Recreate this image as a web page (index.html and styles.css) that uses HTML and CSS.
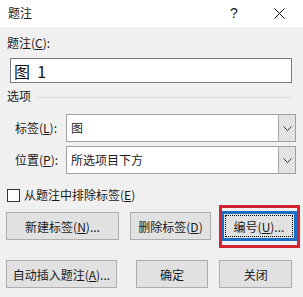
FILE: index.html
```html
<!DOCTYPE html>
<html lang="zh-CN">
<head>
  <meta charset="UTF-8">
  <title>题注</title>
  <link rel="stylesheet" href="styles.css">
</head>
<body>

  <!-- Caption dialog -->
  <div class="dialog">
    <div class="titlebar">
      <span class="title">题注</span>
      <span class="help">?</span>
      <span class="close">
        <svg width="11" height="11" viewBox="0 0 11 11"><path d="M0.5 0.5 L10.5 10.5 M10.5 0.5 L0.5 10.5" stroke="#111" stroke-width="1" fill="none"/></svg>
      </span>
    </div>

    <div class="content">
      <div class="field-label">题注(<u>C</u>):</div>
      <div class="caption-box"><span class="caption-text">图&nbsp;&nbsp;1</span></div>

      <div class="group-label">
        <span>选项</span>
        <span class="rule"></span>
      </div>

      <div class="option-row">
        <label class="option-label">标签(<u>L</u>):</label>
        <div class="combo">
          <span class="combo-text">图</span>
          <span class="combo-btn">
            <svg width="9" height="5" viewBox="0 0 9 5"><polyline points="0.5,0.5 4.5,4.5 8.5,0.5" stroke="#333" stroke-width="1" fill="none"/></svg>
          </span>
        </div>
      </div>

      <div class="option-row second">
        <label class="option-label">位置(<u>P</u>):</label>
        <div class="combo">
          <span class="combo-text">所选项目下方</span>
          <span class="combo-btn">
            <svg width="9" height="5" viewBox="0 0 9 5"><polyline points="0.5,0.5 4.5,4.5 8.5,0.5" stroke="#333" stroke-width="1" fill="none"/></svg>
          </span>
        </div>
      </div>

      <div class="check-row">
        <span class="checkbox"></span>
        <span>从题注中排除标签(<u>E</u>)</span>
      </div>

      <div class="btn-row">
        <button class="btn btn-wide">新建标签(<u>N</u>)...</button>
        <button class="btn btn-mid">删除标签(<u>D</u>)</button>
        <div class="highlight">
          <button class="btn btn-small btn-focus"><span class="focus-rect">编号(<u>U</u>)...</span></button>
        </div>
      </div>

      <div class="btn-row last">
        <button class="btn btn-wide">自动插入题注(<u>A</u>)...</button>
        <button class="btn btn-small btn-ok">确定</button>
        <button class="btn btn-small">关闭</button>
      </div>
    </div>

    <div class="bottom-edge"></div>
  </div>

</body>
</html>
```

FILE: styles.css
```css
/* Page */
body {
  margin: 0;
  background-color: #f0f0f0;
  font-family: "Noto Sans CJK SC", "Microsoft YaHei", sans-serif;
  font-size: 12px;
  color: #1a1a1a;
}

.dialog {
  width: 303px;
  height: 297px;
  background-color: #f0f0f0;
  overflow: hidden;
}

u {
  text-decoration: underline;
  text-underline-offset: 1px;
}

/* Title bar */
.titlebar {
  height: 27px;
  background-color: #fff;
  display: flex;
  align-items: center;
  padding-left: 8px;
}

.title {
  flex: 1;
  line-height: 16px;
  margin-top: -1px;
}

.help {
  font-family: "Liberation Sans", sans-serif;
  font-size: 14px;
  width: 10px;
  margin-right: 34px;
  margin-top: -1px;
}

.close {
  width: 11px;
  height: 11px;
  margin-right: 18px;
  display: flex;
}

/* Content */
.content {
  padding: 8px 0 0 0;
}

.field-label {
  line-height: 16px;
  padding-left: 7px;
}

.caption-box {
  margin: 7px 0 0 10px;
  width: 280px;
  height: 23px;
  border: 1px solid #7a7a7a;
  background-color: #fff;
  display: flex;
  align-items: center;
}

.caption-text {
  font-size: 16px;
  padding-left: 3px;
  color: #111;
}

.group-label {
  display: flex;
  align-items: center;
  margin-top: 5px;
  padding-left: 7px;
  line-height: 16px;
}

.rule {
  flex: 1;
  height: 1px;
  background-color: #dcdcdc;
  margin: 2px 12px 0 6px;
}

.option-row {
  display: flex;
  align-items: center;
  margin-top: 10px;
}

.option-row.second {
  margin-top: 4px;
}

.option-label {
  width: 51px;
  padding-left: 15px;
  line-height: 16px;
}

.combo {
  width: 228px;
  height: 26px;
  border: 1px solid #a0a0a0;
  background-color: #fff;
  display: flex;
}

.combo-text {
  flex: 1;
  line-height: 26px;
  padding-left: 4px;
}

.combo-btn {
  width: 16px;
  background-color: #e3e3e3;
  border-left: 1px solid #a8a8a8;
  display: flex;
  align-items: center;
  justify-content: center;
}

/* Checkbox */
.check-row {
  display: flex;
  align-items: center;
  margin-top: 13px;
  padding-left: 7px;
  line-height: 16px;
}

.checkbox {
  width: 11px;
  height: 11px;
  border: 1px solid #333;
  background-color: #fff;
  margin-right: 4px;
}

/* Buttons */
.btn-row {
  display: flex;
  margin-top: 9px;
  padding-left: 6px;
}

.btn-row.last {
  margin-top: 20px;
}

.btn {
  height: 28px;
  background-color: #e1e1e1;
  border: 1px solid #adadad;
  font-family: inherit;
  font-size: 12px;
  color: #1a1a1a;
  padding: 0;
  margin-right: 11px;
}

.btn-wide {
  width: 113px;
}

.btn-mid {
  width: 81px;
}

.btn-small {
  width: 74px;
}

.btn-ok {
  margin-left: 8px;
}

.btn-focus {
  border: 2px solid #1b6fc4;
  box-shadow: 0 0 0 1px #1b6fc4;
  margin: 0;
  display: flex;
  align-items: center;
  justify-content: center;
}

.focus-rect {
  display: flex;
  align-items: center;
  justify-content: center;
  width: 66px;
  height: 20px;
  border: 1px dotted #000;
}

/* Red annotation frame around the numbering button */
.highlight {
  position: relative;
}

.highlight::after {
  content: "";
  position: absolute;
  left: -3px;
  top: -7px;
  right: -4px;
  bottom: -8px;
  border: 3px solid #d32230;
}

.bottom-edge {
  height: 1px;
  margin: 10px 0 0 80px;
  background-color: #3a3a3a;
}
```
